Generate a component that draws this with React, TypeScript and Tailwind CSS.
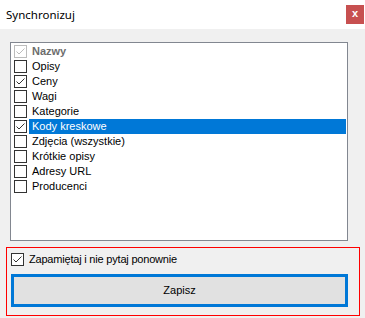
import React from 'react'

type Item = { label: string; checked: boolean; disabled?: boolean; selected?: boolean }

const items: Item[] = [
  { label: 'Nazwy', checked: true, disabled: true },
  { label: 'Opisy', checked: false },
  { label: 'Ceny', checked: true },
  { label: 'Wagi', checked: false },
  { label: 'Kategorie', checked: false },
  { label: 'Kody kreskowe', checked: true, selected: true },
  { label: 'Zdjęcia (wszystkie)', checked: false },
  { label: 'Krótkie opisy', checked: false },
  { label: 'Adresy URL', checked: false },
  { label: 'Producenci', checked: false },
]

// windowsowy checkbox 13x13
function Box({ checked, disabled }: { checked: boolean; disabled?: boolean }) {
  const c = disabled ? '#bcbcbc' : '#333333'
  return (
    <div
      className={`w-[13px] h-[13px] shrink-0 border bg-white ${disabled ? 'border-[#bcbcbc]' : 'border-[#333333]'}`}
    >
      {checked && (
        <svg width="11" height="11" viewBox="0 0 11 11" fill="none">
          <path d="M1.5 5.5 L4 8 L9.5 2.5" stroke={c} strokeWidth="1" />
        </svg>
      )}
    </div>
  )
}

export default function App() {
  return (
    <div
      className="w-[365px] h-[318px] bg-[#f0f0f0] flex flex-col overflow-hidden text-[11px] text-black"
      style={{ fontFamily: '"Liberation Sans", Arial, sans-serif' }}
    >
      {/* pasek tytułu */}
      <div className="h-[29px] bg-white flex items-center justify-between shrink-0">
        <span
          className="pl-[6px] text-[11.5px] text-black"
          style={{ fontFamily: '"Noto Sans", sans-serif' }}
        >
          Synchronizuj
        </span>
        <div className="w-[18px] h-[19px] mr-[1px] bg-[#c75050] text-white text-[11px] font-bold flex items-center justify-center leading-none pb-[2px]">
          x
        </div>
      </div>

      {/* lista */}
      <div className="mt-[13px] ml-[10px] w-[338px] h-[199px] bg-white border border-[#828790] p-[1px] shrink-0">
        {items.map(item => (
          <div key={item.label} className="h-[15px] flex items-center pl-[2px]">
            <Box checked={item.checked} disabled={item.disabled} />
            <div
              className={`ml-[2px] h-[15px] flex-1 flex items-center pl-[3px] leading-none ${
                item.selected ? 'bg-[#0078d7] text-white' : ''
              } ${item.disabled ? 'font-bold text-[#6d6d6d]' : ''}`}
            >
              {item.label}
            </div>
          </div>
        ))}
      </div>

      {/* dolny panel */}
      <div className="mt-[6px] ml-[6px] w-[354px] h-[69px] border border-[#ff0000] px-[4px] pt-[4px] shrink-0">
        <div className="flex items-center h-[14px]">
          <Box checked />
          <span className="ml-[5px] tracking-[-0.2px]">Zapamiętaj i nie pytaj ponownie</span>
        </div>
        <button className="mt-[8px] w-[337px] h-[33px] bg-[#e1e1e1] border-[3px] border-[#0078d7] flex items-center justify-center">
          Zapisz
        </button>
      </div>
    </div>
  )
}
